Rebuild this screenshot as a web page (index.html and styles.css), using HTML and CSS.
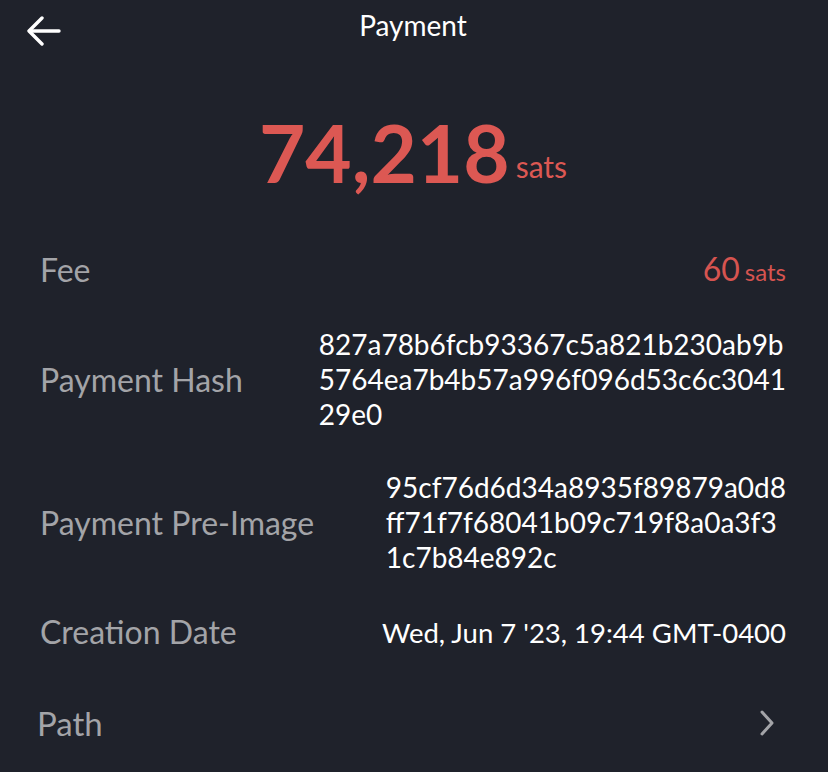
FILE: index.html
```html
<!DOCTYPE html>
<html lang="en">
<head>
  <meta charset="UTF-8" />
  <meta name="viewport" content="width=device-width, initial-scale=1.0" />
  <title>Payment</title>
  <link rel="stylesheet" href="styles.css">
</head>
<body>
  <div class="screen">
    <div class="header">
      <button class="back" aria-label="Back">
        <svg width="34" height="32" viewBox="0 0 34 32" fill="none" stroke="#fff" stroke-width="3.4" stroke-linecap="round" stroke-linejoin="round">
          <path d="M32 16H3" />
          <path d="M15 3L2 16l13 13" />
        </svg>
      </button>
      <h1>Payment</h1>
    </div>

    <div class="amount">
      <span class="amount-value">74,218</span><span class="amount-unit">sats</span>
    </div>

    <div class="details">
      <div class="row">
        <span class="label">Fee</span>
        <span class="value fee">60<span class="unit">sats</span></span>
      </div>
      <div class="row">
        <span class="label">Payment Hash</span>
        <span class="value hash">827a78b6fcb93367c5a821b230ab9b<br>5764ea7b4b57a996f096d53c6c3041<br>29e0</span>
      </div>
      <div class="row">
        <span class="label">Payment Pre-Image</span>
        <span class="value hash">95cf76d6d34a8935f89879a0d8<br>ff71f7f68041b09c719f8a0a3f3<br>1c7b84e892c</span>
      </div>
      <div class="row">
        <span class="label">Creation Date</span>
        <span class="value">Wed, Jun 7 '23, 19:44 GMT-0400</span>
      </div>
      <div class="row link">
        <span class="label">Path</span>
        <svg class="chevron" width="16" height="28" viewBox="0 0 16 28" fill="none" stroke="#a3a4a8" stroke-width="3" stroke-linecap="round" stroke-linejoin="round">
          <path d="M3 3l10 11L3 25" />
        </svg>
      </div>
    </div>
  </div>
</body>
</html>
```

FILE: styles.css
```css
body {
  margin: 0;
  background: #1f222b;
  font-family: Lato, "Open Sans", sans-serif;
  color: #fff;
}
.screen {
  min-height: 100vh;
  padding: 0 42px 0 40px;
}
.header {
  position: relative;
  height: 50px;
  display: flex;
  align-items: center;
  justify-content: center;
}
.header h1 {
  margin: 0;
  font-size: 28px;
  font-weight: 400;
}
.back {
  position: absolute;
  left: -13px;
  top: 15px;
  background: none;
  border: 0;
  padding: 0;
  cursor: pointer;
}
.amount {
  text-align: center;
  margin-top: 54px;
  color: #dc5853;
  line-height: 96px;
}
.amount-value {
  font-size: 80px;
  font-weight: 700;
}
.amount-unit {
  font-size: 30px;
  margin-left: 6px;
  vertical-align: 5px;
}
.details {
  margin-top: 7px;
}
.row {
  display: flex;
  justify-content: space-between;
  align-items: center;
  padding: 19px 0;
}
.label {
  flex-shrink: 0;
  font-size: 32px;
  color: #a3a4a8;
  line-height: 38px;
}
.value {
  font-size: 27.5px;
  line-height: 35px;
  margin-left: 40px;
}
.hash {
  font-size: 28px;
}
.fee {
  color: #d65450;
  font-size: 32px;
}
.fee .unit {
  font-size: 24px;
  margin-left: 5px;
}
.link {
  margin-left: -3px;
  margin-right: 11px;
  padding-top: 34px;
}
.link .label {
  font-size: 33px;
}
```
